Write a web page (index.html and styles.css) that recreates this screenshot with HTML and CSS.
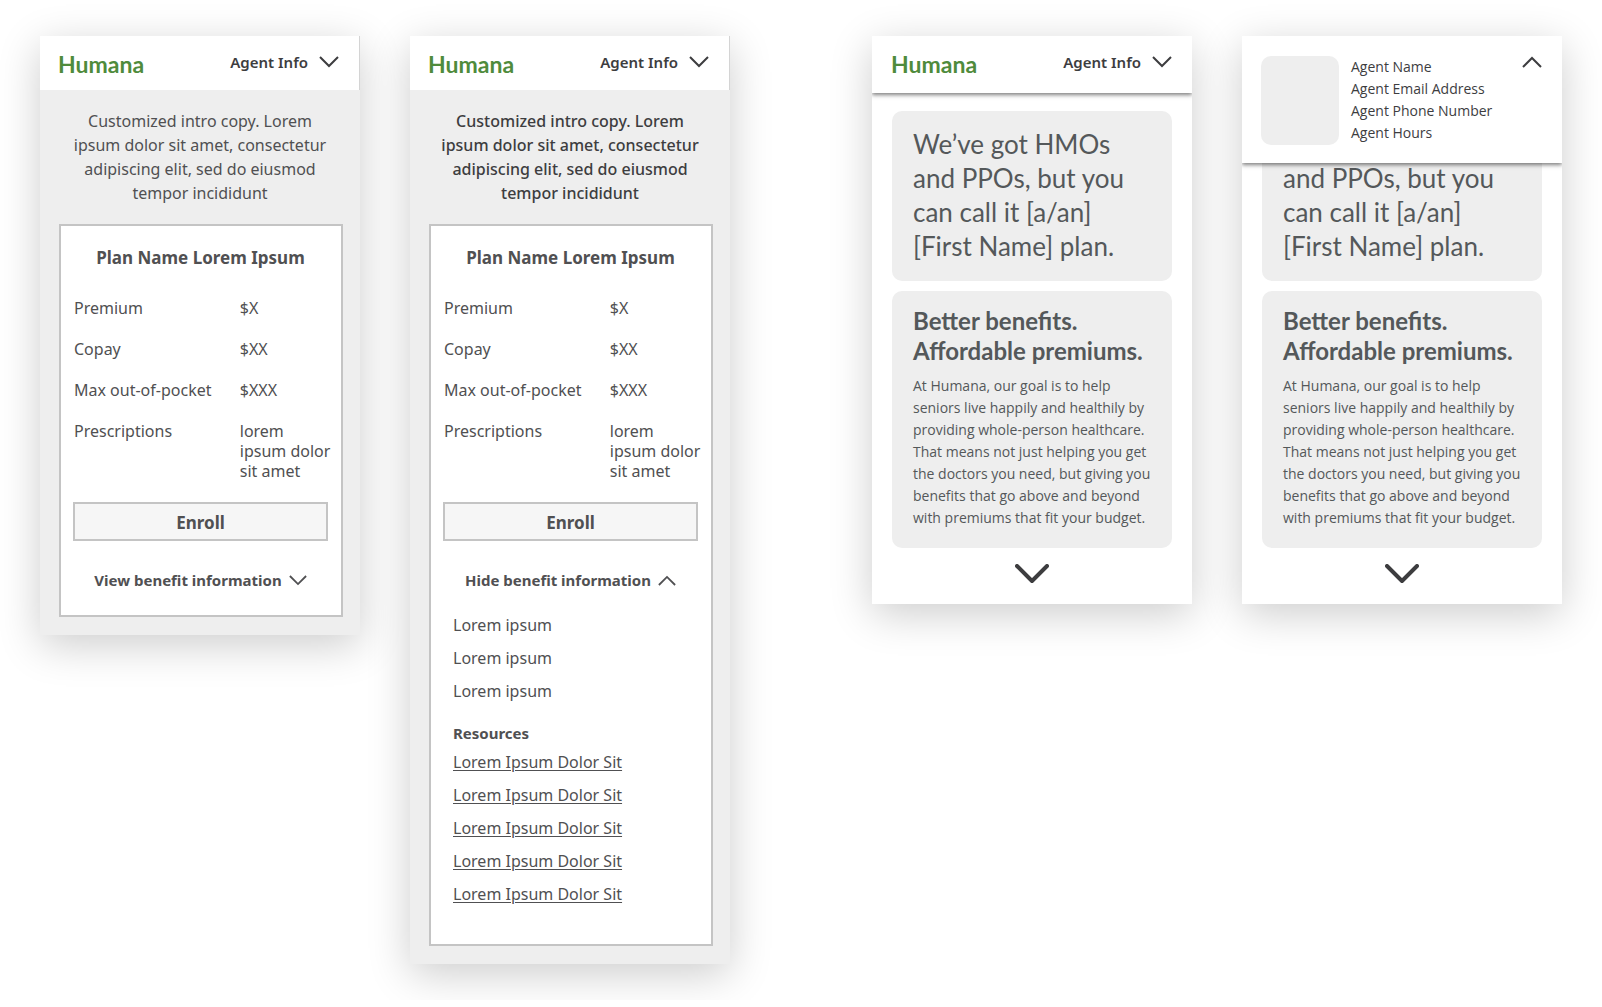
FILE: index.html
```html
<!DOCTYPE html>
<html lang="en">
<head>
<meta charset="utf-8">
<meta name="viewport" content="width=device-width, initial-scale=1">
<title>Humana plan screens</title>
<link rel="stylesheet" href="styles.css">
</head>
<body>
<svg width="0" height="0" class="defs" aria-hidden="true">
  <symbol id="down" viewBox="0 0 20 12"><path d="M1 1 L10 10 L19 1"/></symbol>
  <symbol id="up" viewBox="0 0 20 12"><path d="M1 11 L10 2 L19 11"/></symbol>
</svg>
<main class="board">
  <div class="pair">
    <section class="screen screen--plan">
      <header class="bar">
        <a class="logo" href="#">Humana</a>
        <button class="agent" type="button">Agent Info <svg class="chev"><use href="#down"/></svg></button>
      </header>
      <p class="intro">Customized intro copy. Lorem ipsum dolor sit amet, consectetur adipiscing elit, sed do eiusmod tempor incididunt</p>
      <article class="plan">
        <h2 class="plan-name">Plan Name Lorem Ipsum</h2>
        <table class="costs">
          <tr><th scope="row">Premium</th><td>$X</td></tr>
          <tr><th scope="row">Copay</th><td>$XX</td></tr>
          <tr><th scope="row">Max out-of-pocket</th><td>$XXX</td></tr>
          <tr><th scope="row">Prescriptions</th><td>lorem<br>ipsum dolor<br>sit amet</td></tr>
        </table>
        <button class="enroll" type="button">Enroll</button>
        <button class="toggle" type="button" aria-expanded="false">View benefit information <svg class="chev chev--small"><use href="#down"/></svg></button>
      </article>
    </section>

    <section class="screen screen--plan">
      <header class="bar">
        <a class="logo" href="#">Humana</a>
        <button class="agent" type="button">Agent Info <svg class="chev"><use href="#down"/></svg></button>
      </header>
      <p class="intro intro--medium">Customized intro copy. Lorem ipsum dolor sit amet, consectetur adipiscing elit, sed do eiusmod tempor incididunt</p>
      <article class="plan">
        <h2 class="plan-name">Plan Name Lorem Ipsum</h2>
        <table class="costs">
          <tr><th scope="row">Premium</th><td>$X</td></tr>
          <tr><th scope="row">Copay</th><td>$XX</td></tr>
          <tr><th scope="row">Max out-of-pocket</th><td>$XXX</td></tr>
          <tr><th scope="row">Prescriptions</th><td>lorem<br>ipsum dolor<br>sit amet</td></tr>
        </table>
        <button class="enroll" type="button">Enroll</button>
        <button class="toggle" type="button" aria-expanded="true">Hide benefit information <svg class="chev chev--small"><use href="#up"/></svg></button>
        <div class="benefits">
          <ul class="list">
            <li>Lorem ipsum</li>
            <li>Lorem ipsum</li>
            <li>Lorem ipsum</li>
          </ul>
          <h3 class="resources">Resources</h3>
          <ul class="list">
            <li><a href="#">Lorem Ipsum Dolor Sit</a></li>
            <li><a href="#">Lorem Ipsum Dolor Sit</a></li>
            <li><a href="#">Lorem Ipsum Dolor Sit</a></li>
            <li><a href="#">Lorem Ipsum Dolor Sit</a></li>
            <li><a href="#">Lorem Ipsum Dolor Sit</a></li>
          </ul>
        </div>
      </article>
    </section>
  </div>

  <div class="pair">
    <section class="screen">
      <header class="bar bar--raised">
        <a class="logo" href="#">Humana</a>
        <button class="agent" type="button">Agent Info <svg class="chev"><use href="#down"/></svg></button>
      </header>
      <div class="feed">
        <p class="tile hero">We’ve got HMOs<br>and PPOs, but you<br>can call it [a/an]<br>[First Name] plan.</p>
        <article class="tile story">
          <h2>Better benefits.<br>Affordable premiums.</h2>
          <p>At Humana, our goal is to help<br>seniors live happily and healthily by<br>providing whole-person healthcare.<br>That means not just helping you get<br>the doctors you need, but giving you<br>benefits that go above and beyond<br>with premiums that fit your budget.</p>
        </article>
      </div>
      <button class="more" type="button" aria-label="Scroll down"><svg viewBox="0 0 34 20"><path d="M2 2 L17 17 L32 2"/></svg></button>
    </section>

    <section class="screen">
      <header class="panel">
        <div class="avatar"></div>
        <address class="contact">Agent Name<br>Agent Email Address<br>Agent Phone Number<br>Agent Hours</address>
        <button class="agent" type="button" aria-label="Hide agent info"><svg class="chev"><use href="#up"/></svg></button>
      </header>
      <div class="feed feed--scrolled">
        <p class="tile hero">and PPOs, but you<br>can call it [a/an]<br>[First Name] plan.</p>
        <article class="tile story">
          <h2>Better benefits.<br>Affordable premiums.</h2>
          <p>At Humana, our goal is to help<br>seniors live happily and healthily by<br>providing whole-person healthcare.<br>That means not just helping you get<br>the doctors you need, but giving you<br>benefits that go above and beyond<br>with premiums that fit your budget.</p>
        </article>
      </div>
      <button class="more" type="button" aria-label="Scroll down"><svg viewBox="0 0 34 20"><path d="M2 2 L17 17 L32 2"/></svg></button>
    </section>
  </div>
</main>
</body>
</html>
```
FILE: styles.css
```css
* { box-sizing: border-box; }

body {
  margin: 0;
  background: #fff;
  color: #505052;
  font: 16px/24px "Noto Sans", "Open Sans", sans-serif;
}

h2, h3, p, ul { margin: 0; padding: 0; }

button {
  padding: 0;
  border: 0;
  background: none;
  color: inherit;
  font: inherit;
}

.defs { position: absolute; }

/* Board of phone screens, two pairs side by side */
.board {
  display: grid;
  grid-template-columns: 1fr 1fr;
  gap: 142px;
  padding: 36px 40px;
}

.pair {
  display: grid;
  grid-template-columns: 1fr 1fr;
  align-items: start;
  gap: 50px;
}

.screen {
  background: #fff;
  box-shadow: 0 10px 40px rgba(0, 0, 0, .2);
}

.screen--plan {
  padding-bottom: 18px;
  background: #eee;
}

/* Top bar */
.bar {
  display: flex;
  align-items: flex-start;
  justify-content: space-between;
  height: 54px;
  padding: 13px 20px 0 18px;
  background: #fff;
}

.screen--plan .bar { border-right: 1px solid #d4d4d4; }

.bar--raised,
.panel {
  box-shadow: 0 2px 4px rgba(0, 0, 0, .5);
  clip-path: inset(0 0 -10px);
}

.bar--raised {
  height: 57px;
  padding-left: 19px;
}

.logo {
  color: #4f8b3c;
  font: 700 23px/30px Lato, sans-serif;
  text-decoration: none;
}

.agent {
  display: flex;
  align-items: center;
  gap: 11px;
  height: 26px;
  color: #3d3d3f;
  font-size: 15px;
  font-weight: 600;
}

.chev {
  width: 20px;
  height: 12px;
  fill: none;
  stroke: currentColor;
  stroke-width: 2;
}

.chev--small {
  width: 18px;
  height: 11px;
}

/* Plan screens */
.intro {
  padding: 19px 29px;
  text-align: center;
}

.intro--medium { font-weight: 500; color: #3d3d3f; }

.plan {
  display: flex;
  flex-direction: column;
  margin: 0 17px 0 19px;
  padding: 20px 13px 23px 12px;
  border: 2px solid #c4c4c4;
  background: #fff;
}

.plan-name {
  font-size: 17px;
  font-weight: 700;
  line-height: 24px;
  text-align: center;
}

.costs {
  width: 100%;
  margin-top: 28px;
  border-collapse: collapse;
  table-layout: fixed;
  line-height: 20px;
  white-space: nowrap;
}

.costs th,
.costs td {
  padding: 0 0 21px 1px;
  font-weight: 400;
  text-align: left;
  vertical-align: top;
}

.costs th { width: 65%; }

.enroll {
  height: 39px;
  padding-top: 3px;
  border: 2px solid #c4c4c4;
  background: #f6f6f6;
  font-size: 17px;
  font-weight: 700;
}

.toggle {
  display: flex;
  align-items: center;
  justify-content: center;
  gap: 7px;
  margin-top: 27px;
  font-size: 15px;
  font-weight: 700;
}

.benefits { padding: 17px 10px 10px; }

.list {
  line-height: 33px;
  list-style: none;
}

.list a {
  color: inherit;
  text-underline-offset: 2px;
}

.resources {
  margin: 13px 0 1px;
  font-size: 15px;
  line-height: 24px;
}

/* Story screens */
.feed {
  display: flex;
  flex-direction: column;
  gap: 10px;
  padding: 18px 20px 16px;
  color: #54585a;
}

.tile {
  border-radius: 10px;
  background: #eee;
  white-space: nowrap;
}

.hero {
  padding: 16px 21px 18px;
  font: 26px/34px Lato, sans-serif;
}

/* The top of the first tile has scrolled under the agent panel */
.feed--scrolled {
  margin-top: -2px;
  padding-top: 0;
}

.feed--scrolled .hero {
  padding-top: 0;
  border-radius: 0 0 10px 10px;
}

.story { padding: 15px 21px 19px; }

.story h2 { font: 700 24px/30px Lato, sans-serif; }

.story p {
  margin-top: 9px;
  font: 14px/22px "Open Sans", sans-serif;
}

.more {
  display: block;
  margin: 0 auto;
  padding-bottom: 20px;
  color: #3d3d3f;
}

.more svg {
  display: block;
  width: 34px;
  height: 20px;
  fill: none;
  stroke: currentColor;
  stroke-width: 4;
  stroke-linecap: round;
  stroke-linejoin: round;
}

/* Agent details */
.panel {
  position: relative;
  z-index: 1;
  display: flex;
  gap: 12px;
  height: 127px;
  padding: 20px 20px 0 19px;
  background: #fff;
}

.avatar {
  width: 78px;
  height: 89px;
  border-radius: 10px;
  background: #eee;
}

.contact {
  flex: 1;
  color: #3d3d3f;
  font: 14px/22px "Open Sans", sans-serif;
}

.panel .agent { height: 12px; }
```
